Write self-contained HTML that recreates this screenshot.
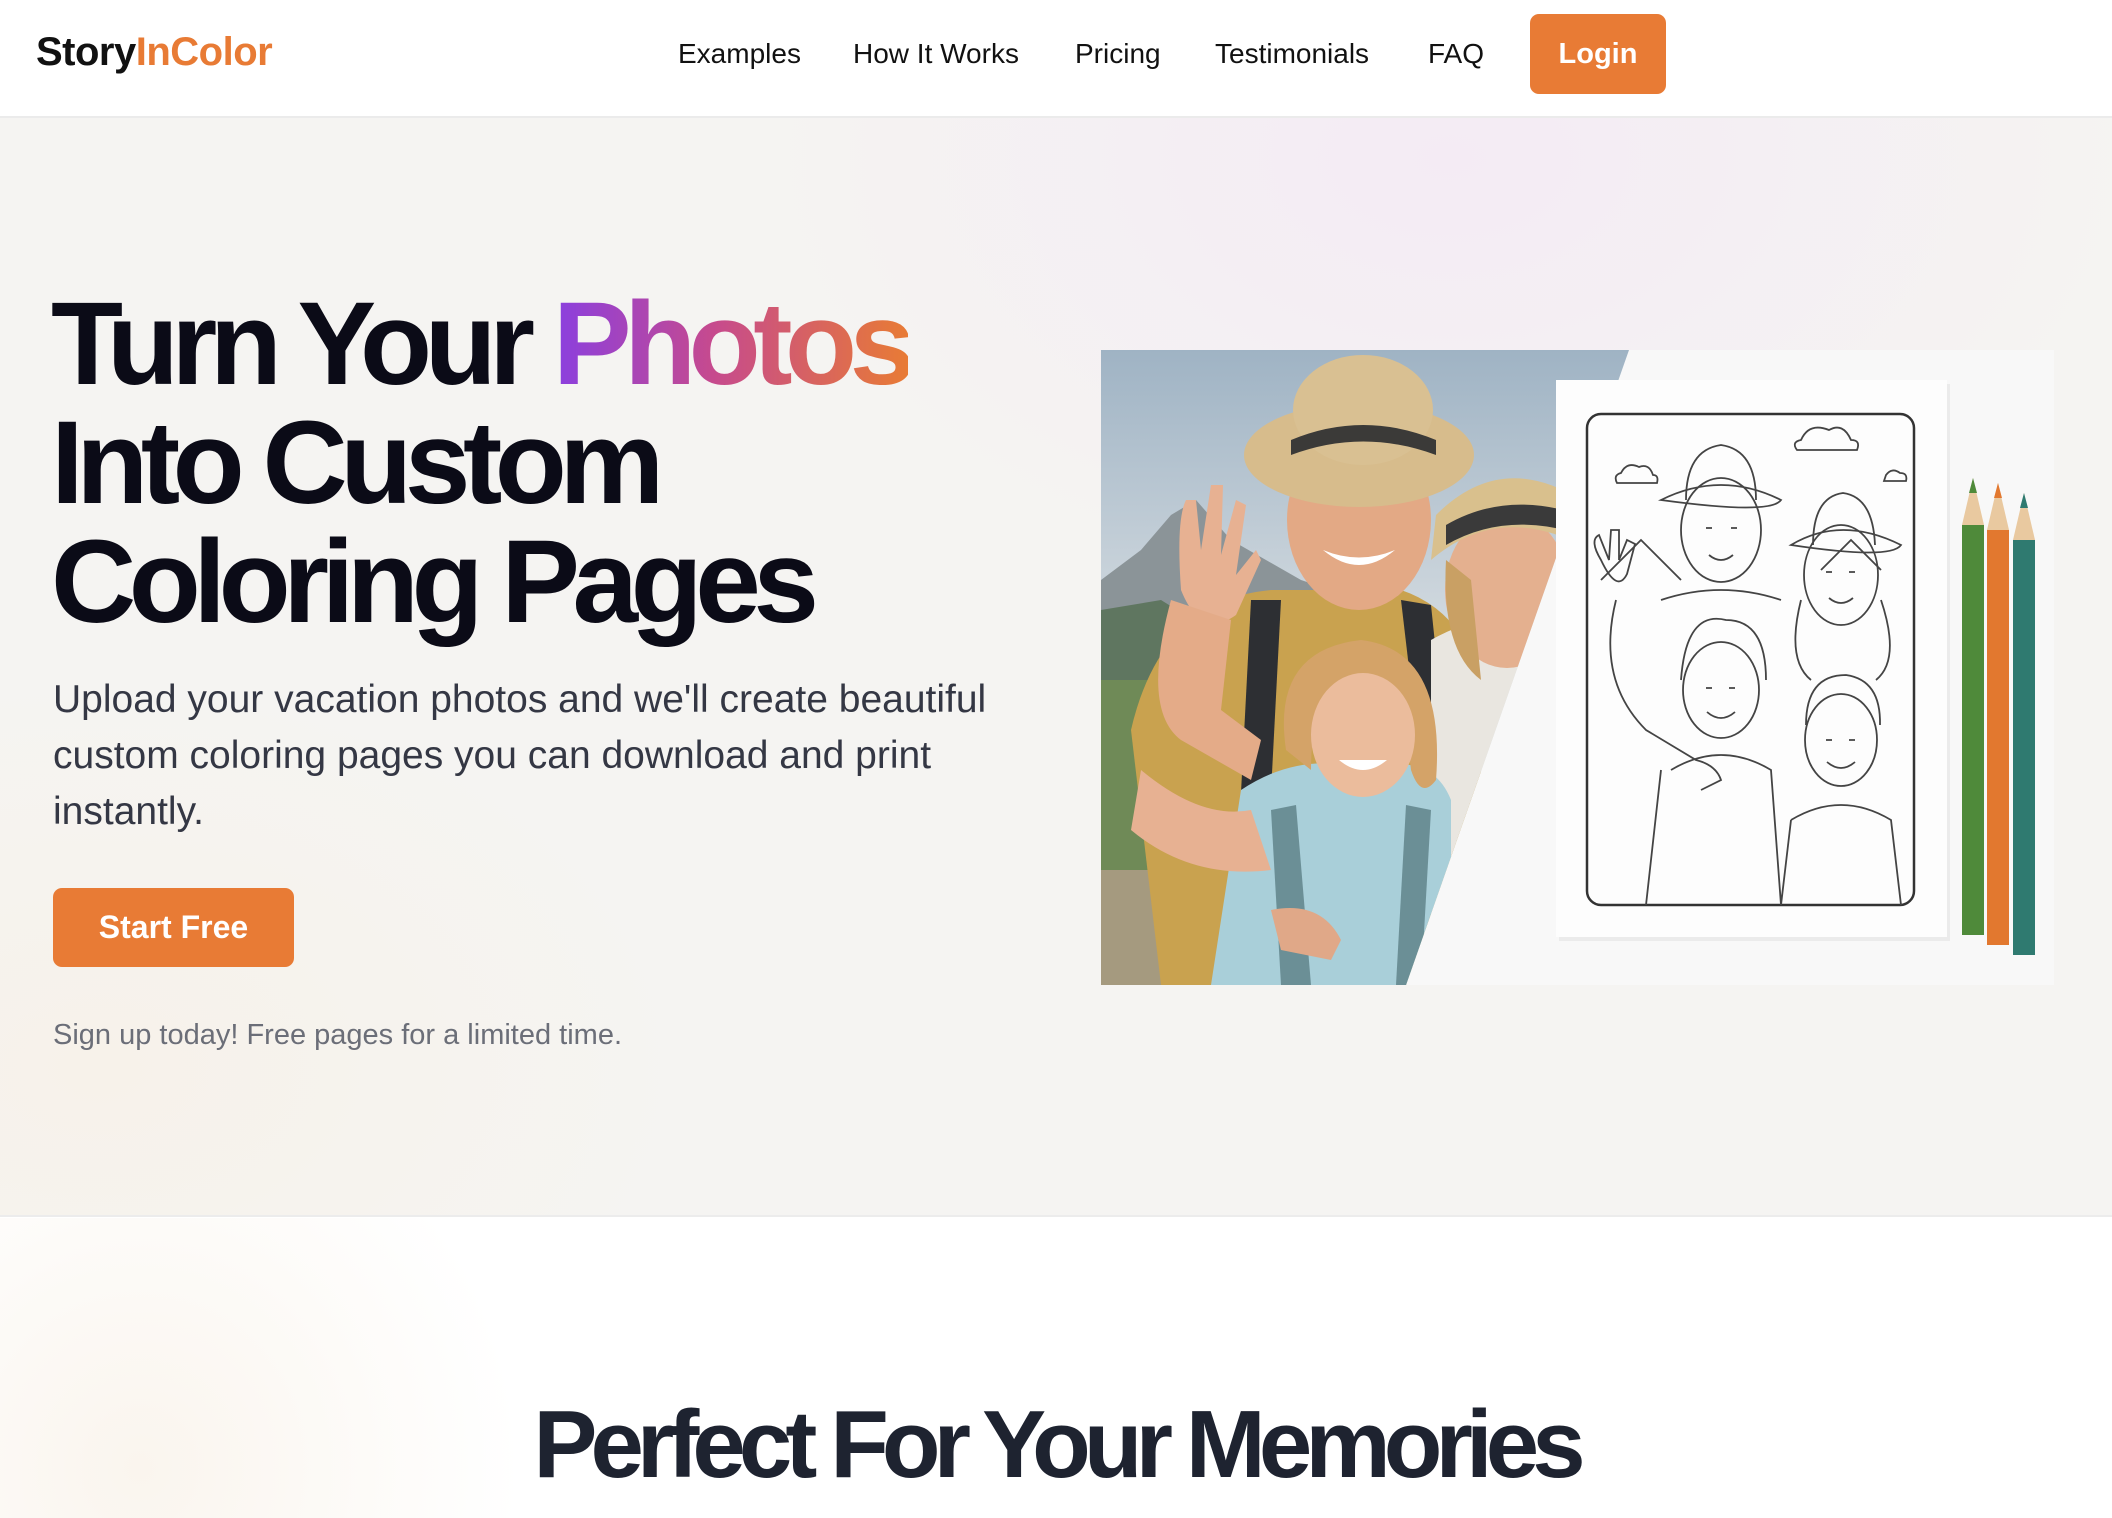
<!DOCTYPE html>
<html><head><meta charset="utf-8"><style>
*{margin:0;padding:0;box-sizing:border-box}
body{width:2112px;height:1518px;overflow:hidden;font-family:"Liberation Sans",sans-serif;background:#fff;position:relative}
.nav{position:absolute;left:0;top:0;width:2112px;height:118px;background:#fff;border-bottom:2px solid #ebebeb;z-index:2}
.logo{position:absolute;left:36px;top:30px;font-size:40px;font-weight:bold;color:#111;letter-spacing:-0.5px}
.logo span{color:#e87b35}
.nav a{position:absolute;top:38px;font-size:28px;color:#111;text-decoration:none}
.login{position:absolute;left:1530px;top:14px;width:136px;height:80px;background:#e87b35;border-radius:9px;color:#fff;font-size:29px;font-weight:bold;text-align:center;line-height:80px}
.hero{position:absolute;left:0;top:118px;width:2112px;height:1099px;background:
radial-gradient(ellipse 700px 450px at 1450px 40px,#f4ebf4 0%,rgba(244,235,244,0) 100%),
radial-gradient(ellipse 600px 400px at 100px 950px,#f7f2ea 0%,rgba(247,242,234,0) 100%),#f5f4f2;border-bottom:2px solid #ececec}
h1{position:absolute;left:51px;top:285px;font-size:118px;line-height:119px;font-weight:bold;color:#0b0b17;letter-spacing:-7.5px;white-space:nowrap}
h1 .g{background:linear-gradient(90deg,#8a3fe0,#c64a8e 45%,#e87b35);-webkit-background-clip:text;background-clip:text;color:transparent}
.sub{position:absolute;left:53px;top:672px;width:1010px;font-size:39px;line-height:56px;color:#343744}
.btn{position:absolute;left:53px;top:888px;width:241px;height:79px;background:#e87b35;border-radius:9px;color:#fff;font-size:32px;font-weight:bold;text-align:center;line-height:79px}
.small{position:absolute;left:53px;top:1019px;font-size:29px;color:#6b6e78}
.sec2{position:absolute;left:0;top:1218px;width:2112px;height:300px;background:radial-gradient(ellipse 380px 400px at 140px 250px,#faf5ee 0%,rgba(255,255,255,0) 100%),#fff}
h2{position:absolute;left:0;width:2112px;top:1390px;text-align:center;font-size:96px;font-weight:bold;color:#1e2330;letter-spacing:-0.072em}
.img{position:absolute;left:1101px;top:350px;width:953px;height:635px;background:#f8f8f8}
</style></head><body>
<div class="nav">
<div class="logo">Story<span>InColor</span></div>
<a style="left:678px">Examples</a>
<a style="left:853px">How It Works</a>
<a style="left:1075px">Pricing</a>
<a style="left:1215px">Testimonials</a>
<a style="left:1428px">FAQ</a>
<div class="login">Login</div>
</div>
<div class="hero"></div>
<h1>Turn Your <span class="g">Photos</span><br>Into Custom<br>Coloring Pages</h1>
<div class="sub">Upload your vacation photos and we'll create beautiful custom coloring pages you can download and print instantly.</div>
<div class="btn">Start Free</div>
<div class="small">Sign up today! Free pages for a limited time.</div>

<div class="img">
<svg width="953" height="635" viewBox="0 0 953 635">
<defs>
<linearGradient id="sky" x1="0" y1="0" x2="0" y2="1"><stop offset="0" stop-color="#9fb3c4"/><stop offset=".5" stop-color="#d9dfe3"/><stop offset="1" stop-color="#c9d0cf"/></linearGradient>
<clipPath id="pc"><polygon points="0,0 528,0 305,635 0,635"/></clipPath>
</defs>
<g clip-path="url(#pc)">
<rect width="560" height="635" fill="url(#sky)"/>
<polygon points="0,230 40,200 70,165 95,150 130,190 200,230 260,250 260,400 0,400" fill="#8b9498"/>
<polygon points="0,260 60,250 140,300 200,330 0,420" fill="#5f7660"/>
<rect x="0" y="330" width="260" height="305" fill="#6f8a57"/>
<rect x="0" y="520" width="200" height="115" fill="#a59a7f"/>
<path d="M30,380 Q60,250 170,240 L300,240 Q360,260 380,330 L380,635 L60,635 Z" fill="#c9a24f"/>
<path d="M150,250 L180,250 L160,635 L130,635 Z" fill="#2d2f33"/>
<path d="M300,250 L330,255 L345,400 L320,420 Z" fill="#2d2f33"/>
<path d="M330,290 Q400,250 480,280 L470,635 L330,635 Z" fill="#e9e6e0"/>
<ellipse cx="406" cy="240" rx="62" ry="78" fill="#e4b08f"/>
<path d="M335,165 Q400,100 480,150 L490,200 Q400,150 330,210 Z" fill="#d9c08d"/>
<path d="M345,175 Q405,140 480,165 L482,185 Q405,160 345,195 Z" fill="#3a3a3a"/>
<path d="M345,210 Q340,300 380,330 L370,230 Z" fill="#c9a064"/>
<ellipse cx="258" cy="170" rx="72" ry="90" fill="#e3a985"/>
<ellipse cx="258" cy="105" rx="115" ry="52" fill="#d7bc8c"/>
<ellipse cx="262" cy="60" rx="70" ry="55" fill="#d9c092"/>
<path d="M190,90 Q262,60 335,90 L335,105 Q262,78 190,105 Z" fill="#3b3a38"/>
<path d="M222,200 Q258,230 294,200 Q258,215 222,200 Z" fill="#fff"/>
<path d="M80,240 Q75,170 85,150 L95,150 L100,200 L110,135 L122,135 L120,205 L135,150 L145,155 L135,225 L155,200 L160,210 L135,265 Q100,290 80,240 Z" fill="#e7b192"/>
<path d="M70,250 Q40,360 80,390 L150,430 L160,390 L120,360 L130,270 Z" fill="#e4ab88"/>
<path d="M140,440 Q200,400 265,420 Q330,400 350,450 L350,635 L110,635 Z" fill="#a9cfd9"/>
<path d="M170,460 L195,455 L210,635 L180,635 Z" fill="#6b8f96"/>
<path d="M305,455 L330,460 L320,635 L295,635 Z" fill="#6b8f96"/>
<path d="M185,400 Q170,300 260,290 Q345,300 335,430 Q320,450 310,420 Q300,330 260,330 Q210,330 210,420 Z" fill="#d4a368"/>
<ellipse cx="262" cy="385" rx="52" ry="62" fill="#ebbc9c"/>
<path d="M238,410 Q262,430 286,410 Z" fill="#fff"/>
<path d="M40,420 Q100,470 150,460 L170,520 Q90,530 30,480 Z" fill="#e7b192"/>
<path d="M170,560 Q220,550 240,590 L230,610 L180,600 Z" fill="#e0a888"/>
</g>
<rect x="458" y="34" width="391" height="557" fill="#000" opacity=".05"/>
<rect x="455" y="30" width="391" height="557" fill="#fdfdfd"/>
<rect x="486" y="64" width="327" height="491" rx="14" fill="none" stroke="#333" stroke-width="2.5"/>
<g fill="none" stroke="#444" stroke-width="1.8">
<path d="M520,123 q6,-12 18,-6 q10,-4 14,8 q6,0 4,8 h-40 q-4,-8 4,-10z"/>
<path d="M700,90 q8,-18 28,-10 q14,-8 22,10 q10,0 6,10 h-60 q-6,-8 4,-10z"/>
<path d="M785,125 q6,-8 14,-2 q8,0 6,8 h-22z"/>
<path d="M500,230 l40,-40 l40,40"/><path d="M720,220 l30,-30 l30,30"/>
<ellipse cx="620" cy="180" rx="40" ry="52"/>
<path d="M560,150 q60,-30 120,0 q-10,15 -120,0z"/><path d="M585,150 q0,-50 35,-55 q35,5 35,55"/>
<path d="M605,178 h6 M630,178 h6 M608,205 q12,10 24,0"/>
<ellipse cx="740" cy="225" rx="37" ry="50"/>
<path d="M690,195 q50,-30 110,0 q-10,15 -110,0z"/><path d="M712,195 q0,-48 30,-52 q30,4 32,52"/>
<path d="M725,222 h6 M748,222 h6 M728,248 q12,10 24,0"/>
<path d="M700,250 q-15,60 10,80 M780,250 q20,60 -5,80"/>
<ellipse cx="620" cy="340" rx="38" ry="48"/><path d="M580,330 q5,-70 45,-60 q40,0 40,60"/>
<path d="M605,338 h6 M628,338 h6 M606,362 q14,12 28,0"/>
<ellipse cx="740" cy="390" rx="36" ry="46"/><path d="M705,375 q0,-50 40,-50 q35,5 34,50"/>
<path d="M725,390 h6 M748,390 h6 M726,412 q14,12 28,0"/>
<path d="M560,250 q60,-20 120,0 M570,420 q50,-30 100,0 L680,555 M560,420 L545,555 M690,470 q50,-30 100,0 L800,555 M690,470 L680,555"/>
<path d="M500,210 q-12,-20 -2,-25 l10,25 l2,-30 l8,0 l0,30 l8,-20 l8,4 l-8,30 q-10,20 -26,-14z"/>
<path d="M515,250 q-20,80 30,130 l50,30 q20,5 25,20 l-20,10"/>
</g>
<polygon points="861,175 883,175 883,585 861,585" fill="#4f8a3a"/>
<polygon points="861,175 872,128 883,175" fill="#e9c9a0"/><polygon points="868,143 872,128 876,143" fill="#4f8a3a"/>
<polygon points="886,180 908,180 908,595 886,595" fill="#e2782f"/>
<polygon points="886,180 897,133 908,180" fill="#e9c9a0"/><polygon points="893,148 897,133 901,148" fill="#e2782f"/>
<polygon points="912,190 934,190 934,605 912,605" fill="#2f7a70"/>
<polygon points="912,190 923,143 934,190" fill="#e9c9a0"/><polygon points="919,158 923,143 927,158" fill="#2f7a70"/>
</svg>
</div>

<div class="sec2"></div>
<h2>Perfect For Your Memories</h2>
</body></html>
